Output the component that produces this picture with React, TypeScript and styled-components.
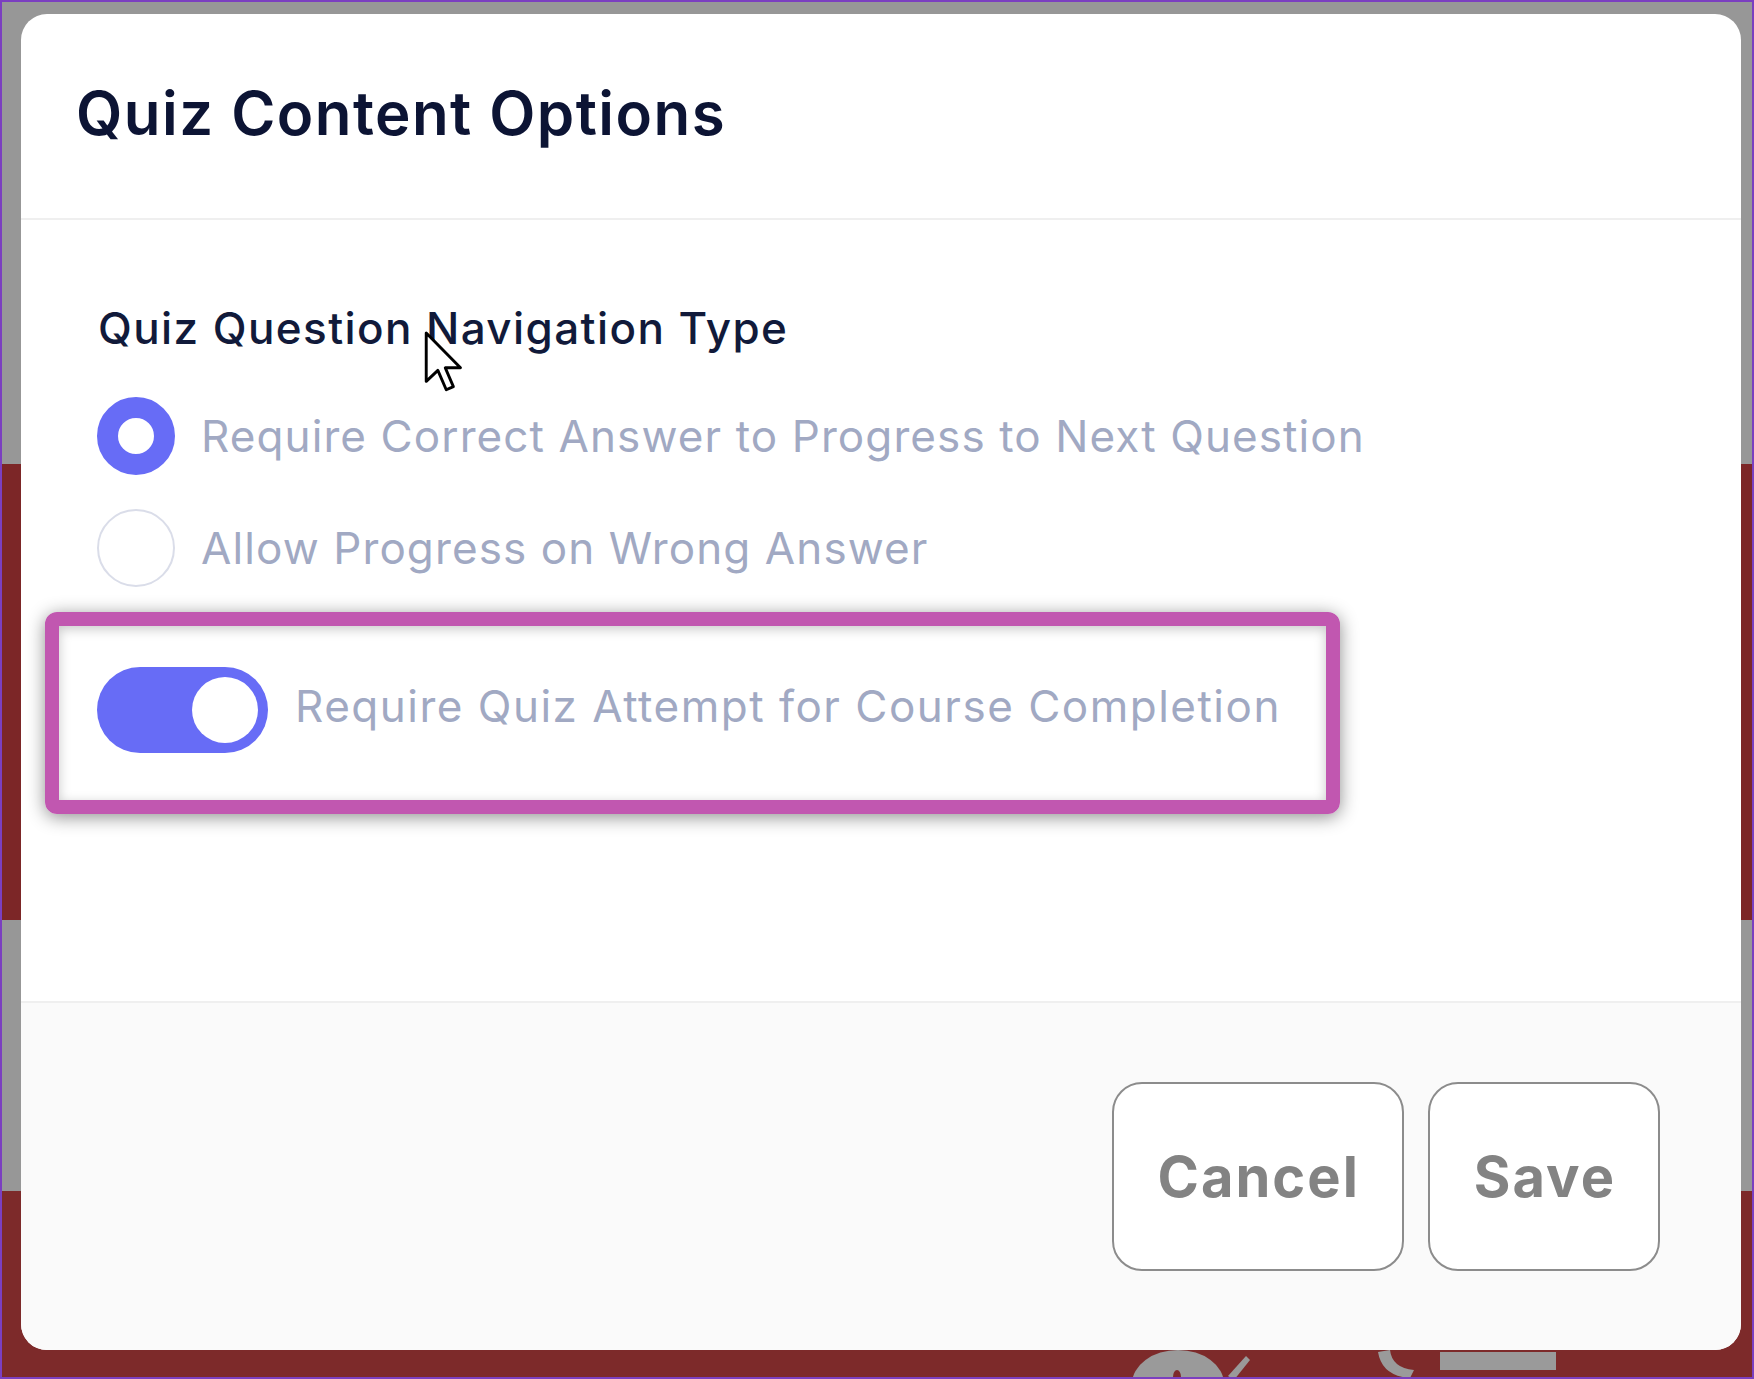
import React from 'react';
import styled, { createGlobalStyle } from 'styled-components';

const GlobalStyle = createGlobalStyle`
  html, body {
    margin: 0;
    padding: 0;
  }
  body {
    font-family: Inter, "Open Sans", sans-serif;
  }
  * {
    box-sizing: border-box;
  }
`;

const Frame = styled.div`
  position: relative;
  width: 1754px;
  height: 1379px;
  border: 2px solid #7b3fc0;
  padding: 12px 0 0 19px;
  overflow: hidden;
  background: linear-gradient(
    to bottom,
    #979797 0,
    #979797 462px,
    #7c2627 462px,
    #7c2627 918px,
    #979797 918px,
    #979797 1189px,
    #7d2a2a 1189px
  );
`;

const BannerArt = styled.svg`
  position: absolute;
  left: 1118px;
  top: 1330px;
  z-index: 0;
`;

const Modal = styled.div`
  position: relative;
  z-index: 1;
  width: 1720px;
  height: 1336px;
  background: #fff;
  border-radius: 26px;
  overflow: hidden;
  display: flex;
  flex-direction: column;
`;

const Header = styled.header`
  height: 206px;
  flex: none;
  display: flex;
  align-items: center;
  padding: 0 55px 6px;
  border-bottom: 2px solid #efefef;
`;

const Title = styled.h1`
  margin: 0;
  font-size: 60px;
  font-weight: 600;
  color: #0c1434;
  letter-spacing: 1.45px;
`;

const Body = styled.section`
  flex: 1;
  display: flex;
  flex-direction: column;
  padding: 80px 0 0 76px;
`;

const SectionLabel = styled.div`
  font-size: 44px;
  line-height: 56px;
  font-weight: 500;
  color: #111a3a;
  letter-spacing: 1.4px;
  margin-left: 1px;
  margin-bottom: 41px;
`;

const OptionList = styled.div`
  display: flex;
  flex-direction: column;
  gap: 34px;
`;

const OptionRow = styled.label`
  display: flex;
  align-items: center;
  gap: 26px;
  font-size: 44px;
  letter-spacing: 1.1px;
  color: #a1a9c3;
`;

const RadioDot = styled.span<{ $checked?: boolean }>`
  flex: none;
  width: 78px;
  height: 78px;
  border-radius: 50%;
  background: #fff;
  border: ${({ $checked }) => ($checked ? '21px solid #676cf6' : '2px solid #dadde9')};
`;

const Highlight = styled.div`
  margin: 25px 0 0 -52px;
  width: 1295px;
  height: 202px;
  border: 14px solid #c157b0;
  border-radius: 12px;
  padding: 0 0 6px 38px;
  display: flex;
  align-items: center;
  gap: 27px;
  box-shadow: 0 3px 18px rgba(0, 0, 0, 0.45), inset 0 3px 12px rgba(0, 0, 0, 0.22);
`;

const Track = styled.span<{ $on?: boolean }>`
  flex: none;
  width: 171px;
  height: 86px;
  border-radius: 43px;
  padding: 0 10px;
  display: flex;
  align-items: center;
  justify-content: ${({ $on }) => ($on ? 'flex-end' : 'flex-start')};
  background: ${({ $on }) => ($on ? '#676cf6' : '#dde1ec')};
`;

const Knob = styled.span`
  width: 66px;
  height: 66px;
  border-radius: 50%;
  background: #fff;
`;

const ToggleText = styled.span`
  font-size: 44px;
  letter-spacing: 1.5px;
  color: #a1a9c3;
  margin-bottom: 9px;
`;

const Footer = styled.footer`
  height: 349px;
  flex: none;
  display: flex;
  justify-content: flex-end;
  align-items: center;
  gap: 24px;
  padding: 0 81px 0 0;
  background: #fafafa;
  border-top: 2px solid #efefef;
`;

const Button = styled.button`
  height: 189px;
  padding: 0 42px 0 44px;
  border: 2px solid #8c8c8c;
  border-radius: 30px;
  background: #fff;
  font-family: Inter, "Open Sans", sans-serif;
  font-size: 56px;
  font-weight: 700;
  letter-spacing: 2px;
  color: #838383;
  cursor: pointer;
`;

const Cursor = styled.svg`
  position: absolute;
  left: 421px;
  top: 327px;
  z-index: 2;
`;

export default function App() {
  return (
    <>
      <GlobalStyle />
      <Frame>
        <BannerArt width="460" height="50" viewBox="0 0 460 50">
          <ellipse cx="58" cy="52" rx="46" ry="34" fill="#9a9a9a" />
          <ellipse cx="57" cy="45" rx="4" ry="7" fill="#7d2a2a" />
          <path d="M108 44 L126 24 L130 28 L114 48 Z" fill="#9a9a9a" />
          <path d="M258 20 Q262 44 290 46 L294 38 Q272 36 270 18 Z" fill="#9a9a9a" />
          <rect x="320" y="20" width="116" height="18" fill="#9a9a9a" />
        </BannerArt>
        <Modal>
          <Header>
            <Title>Quiz Content Options</Title>
          </Header>
          <Body>
            <SectionLabel>Quiz Question Navigation Type</SectionLabel>
            <OptionList>
              <OptionRow>
                <RadioDot $checked />
                Require Correct Answer to Progress to Next Question
              </OptionRow>
              <OptionRow>
                <RadioDot />
                Allow Progress on Wrong Answer
              </OptionRow>
            </OptionList>
            <Highlight>
              <Track $on>
                <Knob />
              </Track>
              <ToggleText>Require Quiz Attempt for Course Completion</ToggleText>
            </Highlight>
          </Body>
          <Footer>
            <Button>Cancel</Button>
            <Button>Save</Button>
          </Footer>
        </Modal>
        <Cursor width="42" height="66" viewBox="0 0 13 20">
          <path
            d="M1 1 L1 16 L4.6 12.6 L7.2 18.6 L9.4 17.6 L6.9 11.8 L11.6 11.8 Z"
            fill="#fff"
            stroke="#000"
            strokeWidth="0.9"
            strokeLinejoin="round"
          />
        </Cursor>
      </Frame>
    </>
  );
}
